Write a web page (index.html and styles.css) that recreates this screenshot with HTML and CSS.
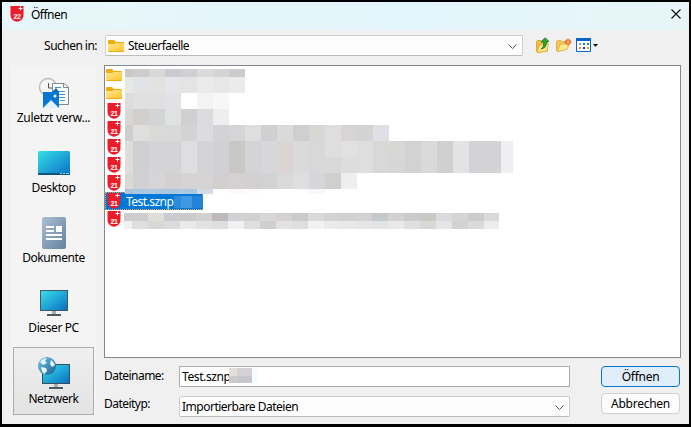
FILE: index.html
```html
<!DOCTYPE html>
<html lang="de">
<head>
<meta charset="utf-8">
<title>Öffnen</title>
<link rel="stylesheet" href="styles.css">
</head>
<body>
<svg class="defs" width="0" height="0">
  <defs>
    <linearGradient id="gold" x1="0" y1="0" x2="1" y2="1"><stop offset="0" stop-color="#ffe596"/><stop offset="1" stop-color="#fdc62d"/></linearGradient>
    <linearGradient id="screen" x1="0" y1="0" x2="1" y2="1"><stop offset="0" stop-color="#35dfe6"/><stop offset="1" stop-color="#0b6fc7"/></linearGradient>
    <linearGradient id="slate" x1="0" y1="0" x2="1" y2="1"><stop offset="0" stop-color="#abbfd3"/><stop offset="1" stop-color="#64819e"/></linearGradient>
    <linearGradient id="globe" x1="0" y1="0" x2="1" y2="1"><stop offset="0" stop-color="#71c6ea"/><stop offset="1" stop-color="#17608f"/></linearGradient>
    <symbol id="folder" viewBox="0 0 16 14"><path d="M0 2Q0 1 1 1H6L8 3H15Q16 3 16 4V12Q16 13 15 13H1Q0 13 0 12Z" fill="#efad0c"/><path d="M0 5H6L8 4H16V12H0Z" fill="url(#gold)"/></symbol>
    <symbol id="shield" viewBox="0 0 14 16"><path d="M.5 0H13.500V9Q13.500 13 9.500 15Q7 16.500 4.500 15Q.5 13 .5 9Z" fill="#ed1c28"/><path d="M10.500 .5V4.500M8.500 2.500H12.500" stroke="#fff"/></symbol>
  </defs>
</svg>
<main class="dialog">
  <header class="titlebar">
    <span class="shield"><svg width="14" height="16"><use href="#shield"/></svg><b>22</b></span>
    <h1><span>Öffnen</span></h1>
    <svg class="close" width="10" height="10" viewBox="0 0 10 10"><path d="M.5 .5L9.500 9.500M9.500 .5L.5 9.500" stroke="#111" stroke-width="1.100"/></svg>
  </header>
  <div class="toolbar">
    <label class="lookin">Suchen in:</label>
    <div class="select location">
      <svg width="16" height="14"><use href="#folder"/></svg>
      <span>Steuerfaelle</span>
      <svg class="chevron" width="9" height="5" viewBox="0 0 9 5"><path d="M.5 .5L4.500 4.500L8.500 .5" fill="none" stroke="#555"/></svg>
    </div>
    <div class="tools">
      <svg width="14" height="16" viewBox="0 0 14 16"><path d="M.5 4.500L1.500 3.500H5L6 4.500H11.500V14L2 15.500L.5 14Z" fill="#eebf45" stroke="#d09b20" stroke-width=".8"/><path d="M3 8L12.500 6.500L11 14L1.500 15.500Z" fill="#ffe58b" stroke="#d9a92f" stroke-width=".7"/><path d="M5 12Q8.500 10 7.500 5H5L9 .7L13 4.500H10.500Q11 11 5 12Z" fill="#2ea52c" stroke="#177b20" stroke-width=".8"/></svg>
      <svg width="16" height="16" viewBox="0 0 16 16"><path d="M.5 4.500L1.500 3.500H5L6 4.500H11V12L2 14.500L.5 13.500Z" fill="#f1c75b" stroke="#d8a735" stroke-width=".8"/><path d="M4 7.500L13.500 6L11 12.500L1.500 14.500Z" fill="#ffe790" stroke="#e0b13b" stroke-width=".8"/><path d="M12 1.500V8.500M8.500 5H15.500M9.700 2.700L14.300 7.300M14.300 2.700L9.700 7.300" stroke="#f35b20" stroke-width="1.300"/><circle cx="12" cy="5" r="1.500" fill="#ffcf72"/></svg>
      <svg class="views" width="23" height="15" viewBox="0 0 23 15"><path d="M.5 .5H14.500V13.500H.5Z" fill="#fff" stroke="#0b65c8"/><path d="M0 0H15V3H0Z" fill="#0b65c8"/><path d="M3 5H5V7H3Z" fill="#8c98c1"/><path d="M7 5H9V7H7Z" fill="#1a7bd0"/><path d="M11 5H13V7H11Z" fill="#269b42"/><path d="M3 9H5V11H3Z" fill="#f17a5d"/><path d="M7 9H9V11H7Z" fill="#14428d"/><path d="M11 9H13V11H11Z" fill="#d6a51a"/><path d="M17 6H22L19.500 8.700Z" fill="#000"/></svg>
    </div>
  </div>
  <div class="content">
    <nav class="places">
      <div class="place recent">
        <svg width="32" height="32" viewBox="0 0 32 32"><circle cx="10" cy="10" r="8.500" fill="#f4f5f5" stroke="#b7b9bb" stroke-width="1.300"/><path d="M10.500 6V11H15" fill="none" stroke="#555"/><path d="M14.500 6.500H26L30.500 10V27.500H14.500Z" fill="#fff" stroke="#888"/><path d="M25.500 6.500V10.500H30" fill="none" stroke="#888"/><path d="M17 10.500H23M20 14.500H27M20 17.500H27M20 20.500H27M22 23.500H27" stroke="#3796dc"/><path d="M14 15L18 11L21 15Z" fill="#0a68bd"/><path d="M5 15H21V31H5Z" fill="#0877d4"/><path d="M5 31L13 23L21 31Z" fill="#e0f4ff"/><circle cx="17" cy="19" r="1.500" fill="#fff"/></svg>
        <span>Zuletzt verw...</span>
      </div>
      <div class="place">
        <svg width="32" height="32" viewBox="0 0 32 32"><rect y="4" width="32" height="24" rx="1.500" fill="url(#screen)"/><path d="M0 26H32V27Q32 28 31 28H1Q0 28 0 27Z" fill="#0b547e"/><path d="M22 26.500H24M25 26.500H27M28 26.500H31" stroke="#8ed6ff"/></svg>
        <span>Desktop</span>
      </div>
      <div class="place">
        <svg width="32" height="32" viewBox="0 0 32 32"><rect x="4" width="24" height="32" rx="2" fill="url(#slate)"/><path d="M8 10H16M8 14H16M8 18H24M8 22H24" stroke="#fff" stroke-width="2"/><path d="M18 9H24V15H18Z" fill="#fff"/></svg>
        <span>Dokumente</span>
      </div>
      <div class="place">
        <svg width="32" height="32" viewBox="0 0 32 32"><path d="M14 24H18V28H14Z" fill="#a5aeb5"/><path d="M9 27H23V29H9Z" fill="#4d5961"/><path d="M2 3H30V24H2Z" fill="#445661"/><path d="M3 4H29V23H3Z" fill="url(#screen)"/></svg>
        <span>Dieser PC</span>
      </div>
      <div class="place selected">
        <svg width="32" height="32" viewBox="0 0 32 32"><path d="M16 27H20V31H16Z" fill="#a5aeb5"/><path d="M11 30H25V32H11Z" fill="#4d5961"/><path d="M4 7H32V27H4Z" fill="#34505d"/><path d="M5 8H31V26H5Z" fill="url(#screen)"/><circle cx="9" cy="9" r="9" fill="url(#globe)"/><path d="M2 5Q5 1 9 1L7 4L9 6L5 8ZM3 10L8 11L9 14L6 17Q3 14 3 10ZM13 3Q16 5 17 8L14 10L12 7Z" fill="#e6f6fb"/></svg>
        <span>Netzwerk</span>
      </div>
    </nav>
    <section class="main">
      <div class="filelist">
        <div class="file"><svg class="dir" width="16" height="14"><use href="#folder"/></svg></div>
        <div class="file"><svg class="dir" width="16" height="14"><use href="#folder"/></svg></div>
        <div class="file"><span class="shield"><svg width="14" height="16"><use href="#shield"/></svg><b>21</b></span></div>
        <div class="file"><span class="shield"><svg width="14" height="16"><use href="#shield"/></svg><b>21</b></span></div>
        <div class="file"><span class="shield"><svg width="14" height="16"><use href="#shield"/></svg><b>21</b></span></div>
        <div class="file"><span class="shield"><svg width="14" height="16"><use href="#shield"/></svg><b>21</b></span></div>
        <div class="file"><span class="shield"><svg width="14" height="16"><use href="#shield"/></svg><b>21</b></span></div>
        <div class="file active"><span class="shield"><svg width="14" height="16"><use href="#shield"/></svg><b>21</b></span><span class="name">Test.sznp</span></div>
        <div class="file"><span class="shield"><svg width="14" height="16"><use href="#shield"/></svg><b>21</b></span></div>
        <svg class="mosaic" width="410" height="170" shape-rendering="crispEdges"></svg>
      </div>
      <div class="bottom">
        <div class="fields">
          <label>Dateiname:</label>
          <div class="input"><span class="value">Test.sznp</span><svg class="blur" width="31" height="16" shape-rendering="crispEdges"><path d="M0 0H8V8H0Z" fill="#e2dfda"/><path d="M8 0H23V8H8Z" fill="#d5d1d6"/><path d="M0 8H8V15H0Z" fill="#cbcbcd"/><path d="M8 8H23V15H8Z" fill="#c8c6cd"/><path d="M23 1H28V15H23Z" fill="#f2fdff"/></svg></div>
          <label class="typelabel">Dateityp:</label>
          <div class="select type"><span>Importierbare Dateien</span><svg class="chevron" width="9" height="5" viewBox="0 0 9 5"><path d="M.5 .5L4.500 4.500L8.500 .5" fill="none" stroke="#555"/></svg></div>
        </div>
        <div class="buttons">
          <button class="primary"><span>Öffnen</span></button>
          <button><span>Abbrechen</span></button>
        </div>
      </div>
    </section>
  </div>
</main>
<script src="mosaic.js"></script>
</body>
</html>
```
FILE: mosaic.js
```js
// Each band: left, top, height, right, first cell width, cell width, cell colours.
const bands = [
  [20, 3, 8, 140, 8, 16, "cbc7c4 cfcccd d8d8d7 cbcad0 d0cfd2 dbd9db d5d5d5 cacccd"],
  [20, 11, 16, 140, 8, 16, "e6e8e5 e2e3e6 e3e2e0 e6e6ea e4e4e4 ece9ea e7e7e7 e9eceb"],
  [20, 27, 16, 124, 8, 16, "dddddd e0e0e1 e1dfe0 e1e2e5 ffffff f3f3f3 f7f7f7"],
  [20, 43, 16, 124, 8, 16, "d6d7d6 d3cfcc d3d4d7 e0e2e1 d0cfd2 dadbde eeeeef"],
  [20, 59, 16, 284, 8, 16, "d1cccd dededf dadad7 d8d9d9 d3d3d5 dadcdd d3d2d6 d5d4d7 dededf d0d0d2 dadad8 cecfd1 d8d7d3 dededf d8d3d4 d3d3d3 dfe0e5"],
  [20, 75, 16, 408, 8, 16, "e0ddd8 d0cfd3 d4d3d5 d4d3d6 dedee0 d4d4d6 d0d1d4 c9c8c5 d4d3d7 d7d7da dad5d3 dadada d6d8da dededf e1e1e4 dededf d8d8d6 d7d7d6 d4d1d3 dadada d2cfd0 e1e4e2 d4d2d6 d1d3d5 efeff2"],
  [20, 91, 16, 408, 8, 16, "e0ddd8 d0cfd3 d4d3d5 d4d3d6 dedee0 d4d4d6 d0d1d4 c9c8c5 d4d3d7 d7d7da dad5d3 dadada d6d8da d9d9da dddde0 dededf d8d8d7 d4d7d5 d4d1d3 d9d9d9 d2cfd0 e1e4e2 d4d2d6 d1d3d5 efeff2"],
  [20, 107, 16, 252, 8, 16, "d9dad4 d1d0d4 d6d4d7 d4d0d1 d7d3d5 d5d3d4 d1cfd0 d6d1d0 d3d0d2 d1d2d4 dadadb dededf d6d6da d0cfcd eeeeef"],
  [20, 123, 5, 108, 8, 16, "a9c6de acc8df acc8df acc8df acc8df d1dce6"],
  [124, 123, 4, 156, 16, 16, "faf9f7 fbfdff"],
  [204, 123, 5, 220, 16, 16, "f7f7f7"],
  [19, 147, 8, 394, 8, 16, "cecccf ceccce dfdfda cbcbd1 cbcacb d3cfd1 beb9ba cfd3d6 d3cfce d8d8da d5d1d3 cbcbcc dadadc d3d3d1 cfd1d5 d3d2d0 c4c9cc d3d1d1 cbcbcd cacac5 dadae0 d6d4d5 cccccc dadada"],
  [19, 155, 8, 394, 8, 16, "f2f1f1 dededf d8d9d7 d9dbdd ebe9ea e1e2e3 dededf f2f1f2 dededf d0ced0 e2e2e2 dededf f2f2f2 ebe9ea e8e8e9 e6e6e6 e2e4e5 eae8e8 dfe1e1 d8d9d7 e5e5e7 d3d2d1 dadbd8 ececee"],
  [69, 130, 12, 98, 7, 11, "2d8bdd 3f98e3 2483d7"]
];
const mosaic = document.querySelector(".mosaic");
for (const [left, top, height, right, first, cellWidth, colours] of bands) {
  let x = left;
  colours.split(" ").forEach((colour, index) => {
    const width = Math.min(index === 0 ? first : cellWidth, right - x);
    const cell = document.createElementNS("http://www.w3.org/2000/svg", "rect");
    cell.setAttribute("x", x);
    cell.setAttribute("y", top);
    cell.setAttribute("width", Math.max(0, width));
    cell.setAttribute("height", height);
    cell.setAttribute("fill", "#" + colour);
    mosaic.append(cell);
    x += width;
  });
}
```
FILE: styles.css
```css
* { box-sizing: border-box; }
body { margin: 0; font: 12px/16px "Noto Sans", "Open Sans", sans-serif; color: #000; letter-spacing: -.53px; }
svg { display: block; flex: none; }
.defs { position: absolute; }
.dialog { width: 691px; height: 427px; background: #f0f0f0; border: solid #000; border-width: 2px 2px 3px; overflow: hidden; }
.titlebar { height: 28px; display: flex; align-items: center; padding: 0 8px 4px 8px; background: linear-gradient(90deg, #e7f6f8, #e3f6fb 60%, #e7f5f7); }
h1 { margin: 2px auto 0 7px; font: inherit; }
.shield { position: relative; width: 14px; height: 16px; }
.shield b { position: absolute; left: 0; top: 6px; width: 14px; color: #fff; font: bold 7px/9px "Liberation Sans", sans-serif; text-align: center; letter-spacing: -.3px; }
.toolbar { height: 35px; display: flex; padding: 5px 0 9px; align-items: center; }
.lookin { width: 103px; padding-right: 8px; text-align: right; }
.select { display: flex; align-items: center; height: 21px; border: 1px solid #ccc; border-bottom-color: #bbb; border-radius: 2px; background: #fdfdfd; padding: 0 5px 0 2px; }
.location { width: 418px; gap: 4px; }
.chevron { margin-left: auto; margin-top: 2px; }
.tools { display: flex; align-items: center; gap: 6px; margin-left: 13px; }
.tools svg { margin-top: -1px; }
.tools .views { margin-left: -2px; margin-top: 0; }
.content { display: flex; height: 357px; }
.places { width: 85px; height: 350px; margin: 0 8px 0 9px; background: #f4f4f4; padding: 2px 2px 0; letter-spacing: -.4px; }
.place { height: 70px; display: flex; flex-direction: column; align-items: center; padding-top: 10px; gap: 1px; }
.place.selected { width: 81px; height: 68px; border: 1px solid #acacac; background: linear-gradient(#efefef, #e3e3e3); }
.place.selected svg { margin-top: -1px; }
.place.selected { gap: 2px; }
.recent { letter-spacing: -.3px; }
.main { width: 577px; }
.filelist { position: relative; height: 293px; background: #fff; border: 1px solid #828790; }
.file { display: flex; align-items: center; height: 18px; padding-left: 1px; }
.file .shield { margin-left: 1px; }
.file.active { width: 98px; padding-left: 0; background: #0078d7; color: #fff; border: 1px dotted #eda14b; }
.name { margin: 2px 0 0 5px; }
.mosaic { position: absolute; left: 0; top: 0; }
.bottom { display: flex; justify-content: space-between; padding: 8px 1px 0 0; }
.fields { display: grid; grid-template: 22px 21px / 75px 391px; row-gap: 8px; }
.fields label { padding-top: 2px; }
.fields .typelabel { padding-top: 0; }
.input { position: relative; display: flex; align-items: center; height: 21px; border: 1px solid #aaadb3; background: #fff; padding: 0 2px; }
.blur { position: absolute; left: 49px; top: 1px; }
.value { letter-spacing: -.4px; }
.type { letter-spacing: -.5px; }
.buttons { width: 79px; display: grid; grid-template-rows: 21px 21px; gap: 6px; }
button { padding: 0; border: 1px solid #d0d0d0; border-radius: 4px; background: #fdfdfd; font: inherit; letter-spacing: -.25px; color: #000; }
.primary { border-color: #0078d4; background: #e0eef9; }
```
